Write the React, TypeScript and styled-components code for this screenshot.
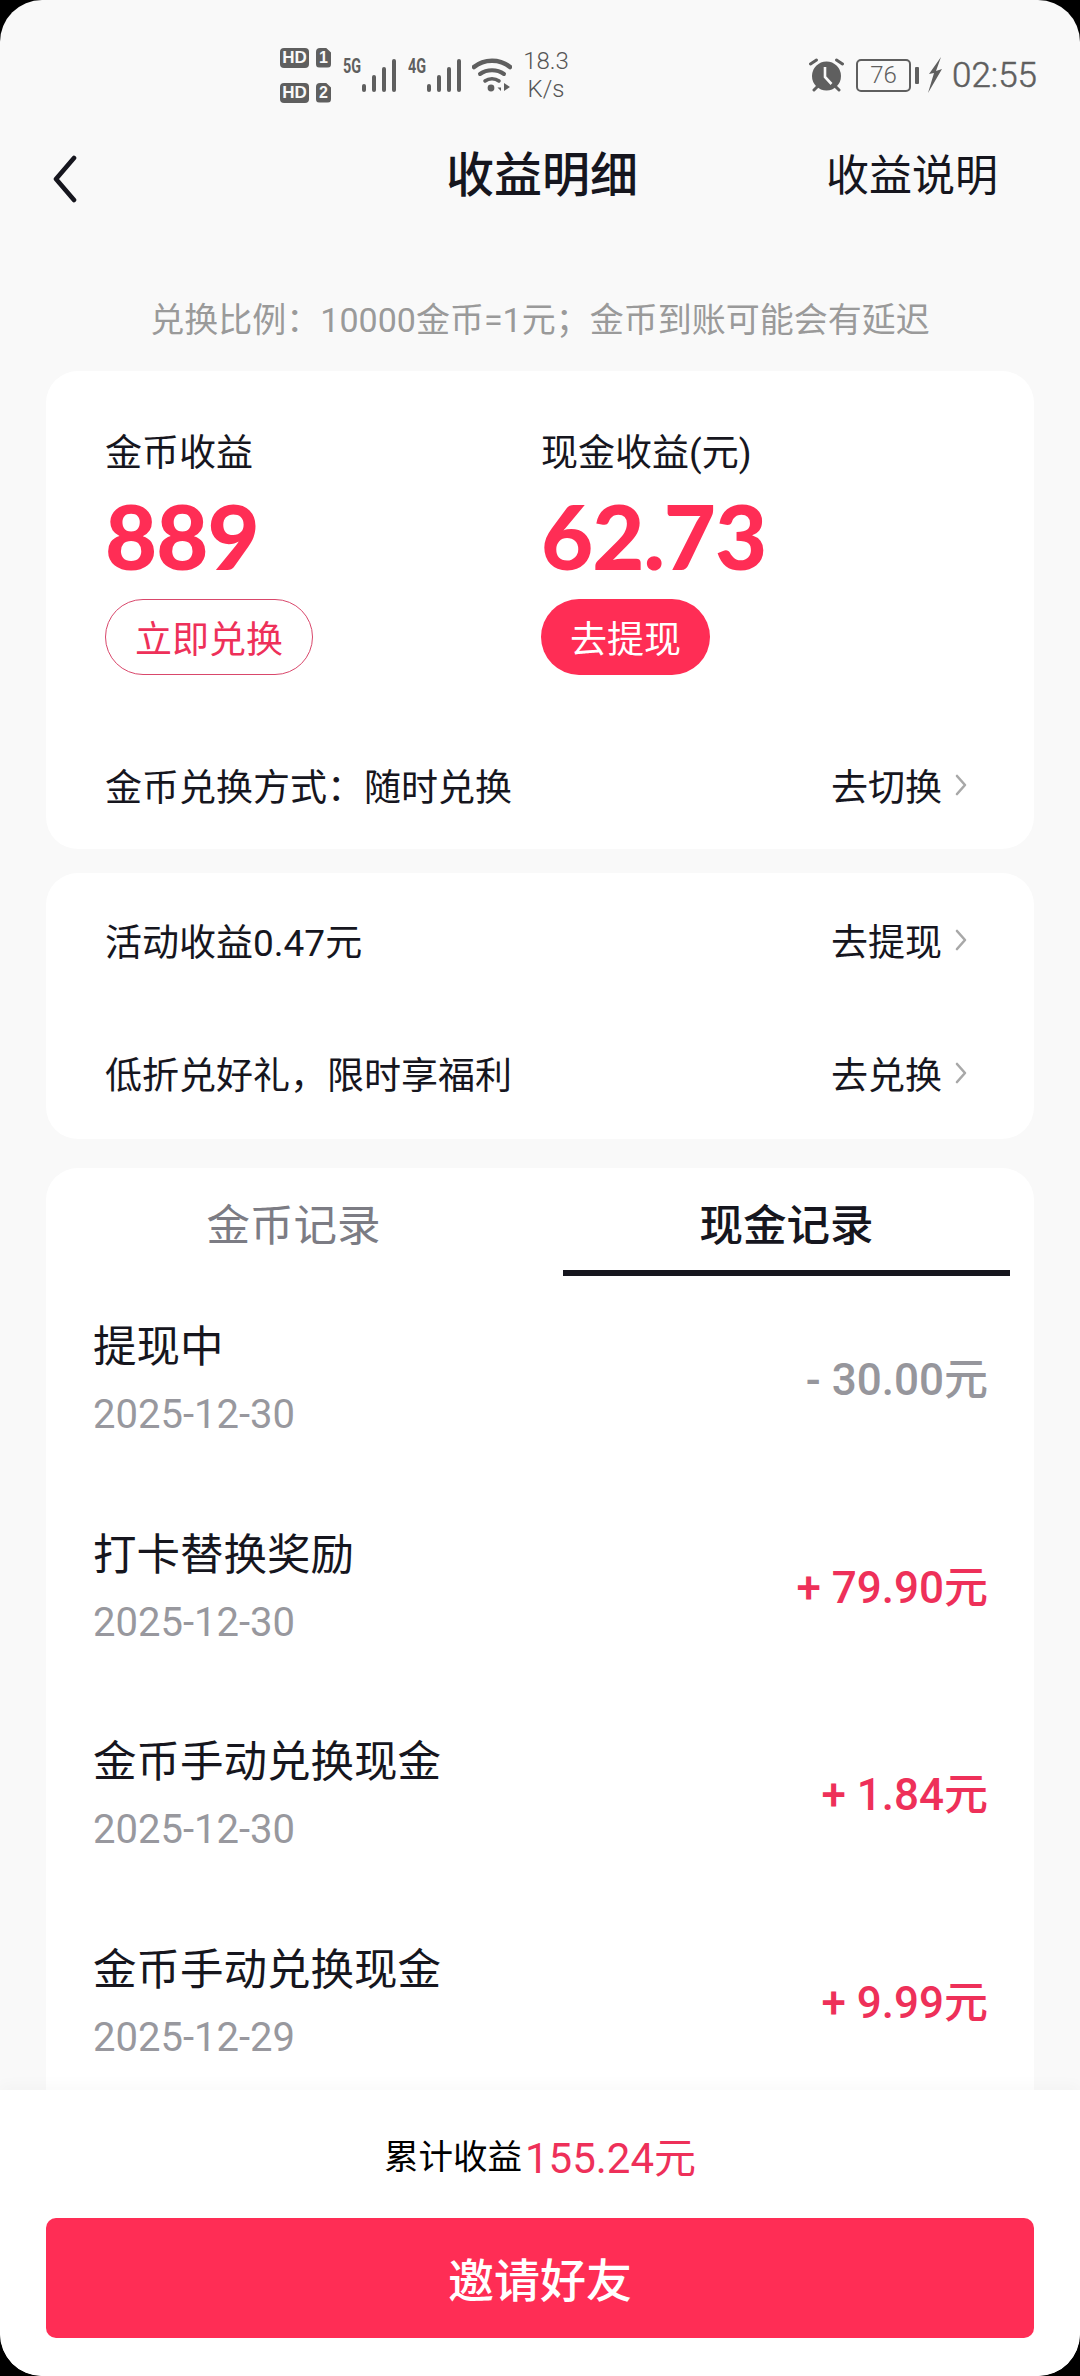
import React from "react";
import styled, { createGlobalStyle } from "styled-components";

const CJK = `Roboto, "Noto Sans CJK SC", "Noto Sans", sans-serif`;
const RED = "#ff2d55";

const GlobalStyle = createGlobalStyle`
  html, body {
    margin: 0;
    padding: 0;
    background: #000;
  }
  * {
    box-sizing: border-box;
  }
`;

const Page = styled.div`
  width: 1080px;
  height: 2376px;
  display: flex;
  flex-direction: column;
  overflow: hidden;
  background: #f9f9f9;
  border-radius: 42px;
  font-family: ${CJK};
  color: #16161e;
`;

const StatusBar = styled.div`
  height: 122px;
  flex: none;
  padding: 43px 43px 0 280px;
  display: flex;
  align-items: flex-start;
  justify-content: space-between;
  color: #5f5f5f;
  font-family: Roboto, sans-serif;
`;

const StatusGroup = styled.div`
  display: flex;
  align-items: center;
  height: 64px;
`;

const Speed = styled.div`
  margin-left: 9px;
  width: 50px;
  font-size: 24px;
  line-height: 28px;
  font-weight: 300;
  text-align: center;
  color: #555;
`;

const Clock = styled.span`
  font-size: 35px;
  font-weight: 300;
  margin-left: 9px;
  color: #5f5f5f;
  -webkit-text-stroke: 0.5px #5f5f5f;
`;

const Battery = styled.div`
  width: 55px;
  height: 33px;
  margin-left: 12px;
  border: 2.5px solid #5f5f5f;
  border-radius: 5px;
  font-size: 24px;
  font-weight: 300;
  line-height: 28px;
  text-align: center;
  color: #5f5f5f;
`;

const BatteryCap = styled.div`
  width: 4px;
  height: 17px;
  margin: 0 8px 0 4px;
  border-radius: 1px;
  background: #5f5f5f;
`;

const NavBar = styled.div`
  height: 114px;
  flex: none;
  padding: 0 82px 0 52px;
  display: flex;
  align-items: center;
  justify-content: space-between;
  position: relative;
`;

const NavTitle = styled.div`
  position: absolute;
  left: 446px;
  top: 25px;
  font-size: 48px;
  line-height: 58px;
  font-weight: 500;
`;

const NavAction = styled.div`
  font-size: 43px;
  line-height: 58px;
  padding-bottom: 6px;
`;

const Hint = styled.div`
  margin-top: 60px;
  height: 48px;
  flex: none;
  font-size: 34px;
  line-height: 48px;
  color: #9a9a9a;
  text-align: center;
`;

const Content = styled.div`
  flex: 1;
  min-height: 0;
  overflow: hidden;
  padding: 27px 46px 0;
  display: flex;
  flex-direction: column;
`;

const Card = styled.div<{ $gap?: number }>`
  flex: none;
  background: #fff;
  border-radius: 32px;
  margin-top: ${(p) => p.$gap ?? 0}px;
`;

const EarningGrid = styled.div`
  display: grid;
  grid-template-columns: 436px 1fr;
  padding: 58px 59px 45px;
`;

const EarningCol = styled.div`
  display: flex;
  flex-direction: column;
  align-items: flex-start;
`;

const EarningLabel = styled.div`
  font-size: 37px;
  line-height: 50px;
`;

const EarningValue = styled.div`
  margin-top: 2px;
  height: 108px;
  font-family: Lato, sans-serif;
  font-weight: 900;
  font-size: 90px;
  line-height: 108px;
  letter-spacing: -1px;
  color: ${RED};
`;

const PillButton = styled.div<{ $filled?: boolean }>`
  margin-top: 10px;
  height: 76px;
  padding: 0 29px;
  display: flex;
  align-items: center;
  border-radius: 38px;
  font-size: 37px;
  border: ${(p) => (p.$filled ? "none" : "1.5px solid #d9476b")};
  background: ${(p) => (p.$filled ? RED : "#fff")};
  color: ${(p) => (p.$filled ? "#fff" : "#ee3059")};
`;

const LinkRow = styled.div<{ $height: number }>`
  height: ${(p) => p.$height}px;
  padding: 0 67px 0 59px;
  display: flex;
  align-items: center;
  justify-content: space-between;
  font-size: 37px;
`;

const LinkAction = styled.div`
  display: flex;
  align-items: center;
  gap: 13px;
`;

const Tabs = styled.div`
  display: grid;
  grid-template-columns: 447px 447px;
  justify-content: space-between;
  padding: 0 24px;
`;

const Tab = styled.div<{ $active?: boolean }>`
  height: 108px;
  padding-top: 30px;
  text-align: center;
  font-size: 43.5px;
  line-height: 58px;
  font-weight: ${(p) => (p.$active ? 500 : 400)};
  color: ${(p) => (p.$active ? "#16161e" : "#7c7c84")};
  border-bottom: 6px solid ${(p) => (p.$active ? "#16161e" : "transparent")};
`;

const RecordList = styled.div`
  padding: 42px 46px 0 47px;
`;

const RecordRow = styled.div`
  height: 207.6px;
  display: flex;
  justify-content: space-between;
  align-items: flex-start;
`;

const RecordTitle = styled.div`
  font-size: 43.5px;
  line-height: 60px;
`;

const RecordDate = styled.div`
  margin-top: 12px;
  font-size: 40px;
  line-height: 50px;
  color: #98989e;
`;

const RecordAmount = styled.div<{ $out?: boolean }>`
  margin-top: 32px;
  font-size: 44px;
  line-height: 60px;
  font-weight: 500;
  color: ${(p) => (p.$out ? "#96969c" : "#ee3059")};
`;

const Footer = styled.div`
  flex: none;
  height: 286px;
  padding: 0 46px;
  background: #fff;
  border-radius: 0 0 42px 42px;
  box-shadow: 0 -6px 14px rgba(0, 0, 0, 0.025);
  position: relative;
`;

const Total = styled.div`
  height: 128px;
  display: flex;
  align-items: center;
  justify-content: center;
  font-size: 34.5px;
  color: #000;
`;

const TotalValue = styled.span`
  font-size: 42px;
  color: #ee3059;
  margin-left: 3px;
`;

const InviteButton = styled.div`
  height: 120px;
  padding-bottom: 2px;
  display: flex;
  align-items: center;
  justify-content: center;
  background: ${RED};
  border-radius: 10px;
  color: #fff;
  font-size: 46px;
  font-weight: 500;
`;

const HdStack = styled.div`
  display: flex;
  flex-direction: column;
  gap: 15px;
`;

const HdBadgeRow = styled.div`
  display: flex;
  gap: 7px;
`;

const HdBadge = styled.div<{ $small?: boolean }>`
  height: 20px;
  width: ${(p) => (p.$small ? 15 : 29)}px;
  border-radius: 4px;
  background: #5f5f5f;
  color: #f9f9f9;
  font-family: "Liberation Sans", sans-serif;
  font-weight: 700;
  font-size: ${(p) => (p.$small ? 16 : 17)}px;
  line-height: 20px;
  text-align: center;
  clip-path: ${(p) => (p.$small ? "polygon(0 0, 65% 0, 100% 25%, 100% 100%, 0 100%)" : "none")};
`;

const SignalWrap = styled.div`
  margin-left: 12px;
  display: flex;
  align-items: flex-start;
  height: 33px;
`;

const NetLabel = styled.span`
  font-family: Roboto, sans-serif;
  font-size: 20px;
  font-weight: 700;
  line-height: 14px;
  transform: scaleX(0.72);
  transform-origin: left;
  width: 18px;
  color: #5f5f5f;
`;

const Chevron = () => (
  <svg width="12" height="24" viewBox="0 0 12 24" fill="none">
    <path d="M2 3l8 9-8 9" stroke="#a8a8a8" strokeWidth="2.6" strokeLinecap="round" strokeLinejoin="round" />
  </svg>
);

const BackIcon = () => (
  <svg width="26" height="48" viewBox="0 0 26 48" fill="none">
    <path d="M22 3L4 24l18 21" stroke="#16161e" strokeWidth="4.6" strokeLinecap="round" strokeLinejoin="round" />
  </svg>
);

const SignalBars = () => (
  <svg width="35" height="33" viewBox="0 0 35 33">
    <rect x="1" y="25" width="4" height="8" rx="2" fill="#5f5f5f" />
    <rect x="11" y="16" width="4" height="17" rx="2" fill="#5f5f5f" />
    <rect x="21" y="8" width="4" height="25" rx="2" fill="#5f5f5f" />
    <rect x="31" y="0" width="4" height="33" rx="2" fill="#5f5f5f" />
  </svg>
);

const WifiIcon = () => (
  <svg width="40" height="34" viewBox="0 0 40 34" fill="none" style={{ marginLeft: 11 }}>
    <path d="M2 9c10-8.500 26-8.500 36 0" stroke="#5f5f5f" strokeWidth="4.500" strokeLinecap="round" />
    <path d="M8 16c7-5 17-5 24 0" stroke="#5f5f5f" strokeWidth="4" strokeLinecap="round" />
    <path d="M13 23c4-3 10-3 14 0" stroke="#5f5f5f" strokeWidth="3.600" strokeLinecap="round" />
    <circle cx="19" cy="30" r="3.400" fill="#5f5f5f" />
    <path d="M29 25v8l-3.500-3.500h3.500z" fill="#5f5f5f" />
    <path d="M32 25l6 4-6 4z" fill="#5f5f5f" />
  </svg>
);

const AlarmIcon = () => (
  <svg width="35" height="34" viewBox="0 0 35 34">
    <circle cx="17.500" cy="18" r="14.500" fill="#5f5f5f" />
    <path d="M16 9v10l6.500 7" fill="none" stroke="#f9f9f9" strokeWidth="2.600" />
    <path d="M1.500 6l6-4M33.500 6l-6-4" stroke="#5f5f5f" strokeWidth="3" strokeLinecap="round" />
    <path d="M5 32l3-3M30 32l-3-3" stroke="#5f5f5f" strokeWidth="3" strokeLinecap="round" />
  </svg>
);

const BoltIcon = () => (
  <svg width="16" height="36" viewBox="0 0 16 36">
    <path d="M14 0L2 17l5-1-6 20L15 12l-6 2z" fill="#5f5f5f" />
  </svg>
);

const records = [
  { title: "提现中", date: "2025-12-30", amount: "- 30.00元", out: true },
  { title: "打卡替换奖励", date: "2025-12-30", amount: "+ 79.90元" },
  { title: "金币手动兑换现金", date: "2025-12-30", amount: "+ 1.84元" },
  { title: "金币手动兑换现金", date: "2025-12-29", amount: "+ 9.99元" },
];

export default function App() {
  return (
    <>
      <GlobalStyle />
      <Page>
        <StatusBar>
          <StatusGroup>
            <HdStack>
              <HdBadgeRow>
                <HdBadge>HD</HdBadge>
                <HdBadge $small>1</HdBadge>
              </HdBadgeRow>
              <HdBadgeRow>
                <HdBadge>HD</HdBadge>
                <HdBadge $small>2</HdBadge>
              </HdBadgeRow>
            </HdStack>
            <SignalWrap>
              <NetLabel>5G</NetLabel>
              <SignalBars />
            </SignalWrap>
            <SignalWrap>
              <NetLabel>4G</NetLabel>
              <SignalBars />
            </SignalWrap>
            <WifiIcon />
            <Speed>
              18.3
              <br />
              K/s
            </Speed>
          </StatusGroup>
          <StatusGroup>
            <AlarmIcon />
            <Battery>76</Battery>
            <BatteryCap />
            <BoltIcon />
            <Clock>02:55</Clock>
          </StatusGroup>
        </StatusBar>

        <NavBar>
          <BackIcon />
          <NavTitle>收益明细</NavTitle>
          <NavAction>收益说明</NavAction>
        </NavBar>

        <Hint>兑换比例：10000金币=1元；金币到账可能会有延迟</Hint>

        <Content>
          <Card>
            <EarningGrid>
              <EarningCol>
                <EarningLabel>金币收益</EarningLabel>
                <EarningValue>889</EarningValue>
                <PillButton>立即兑换</PillButton>
              </EarningCol>
              <EarningCol>
                <EarningLabel>现金收益(元)</EarningLabel>
                <EarningValue>62.73</EarningValue>
                <PillButton $filled>去提现</PillButton>
              </EarningCol>
            </EarningGrid>
            <LinkRow $height={129}>
              <span>金币兑换方式：随时兑换</span>
              <LinkAction>
                去切换
                <Chevron />
              </LinkAction>
            </LinkRow>
          </Card>

          <Card $gap={24}>
            <LinkRow $height={133}>
              <span>活动收益0.47元</span>
              <LinkAction>
                去提现
                <Chevron />
              </LinkAction>
            </LinkRow>
            <LinkRow $height={133}>
              <span>低折兑好礼，限时享福利</span>
              <LinkAction>
                去兑换
                <Chevron />
              </LinkAction>
            </LinkRow>
          </Card>

          <Card $gap={29}>
            <Tabs>
              <Tab>金币记录</Tab>
              <Tab $active>现金记录</Tab>
            </Tabs>
            <RecordList>
              {records.map((r, i) => (
                <RecordRow key={i}>
                  <div>
                    <RecordTitle>{r.title}</RecordTitle>
                    <RecordDate>{r.date}</RecordDate>
                  </div>
                  <RecordAmount $out={r.out}>{r.amount}</RecordAmount>
                </RecordRow>
              ))}
            </RecordList>
          </Card>
        </Content>

        <Footer>
          <Total>
            累计收益<TotalValue>155.24元</TotalValue>
          </Total>
          <InviteButton>邀请好友</InviteButton>
        </Footer>
      </Page>
    </>
  );
}
